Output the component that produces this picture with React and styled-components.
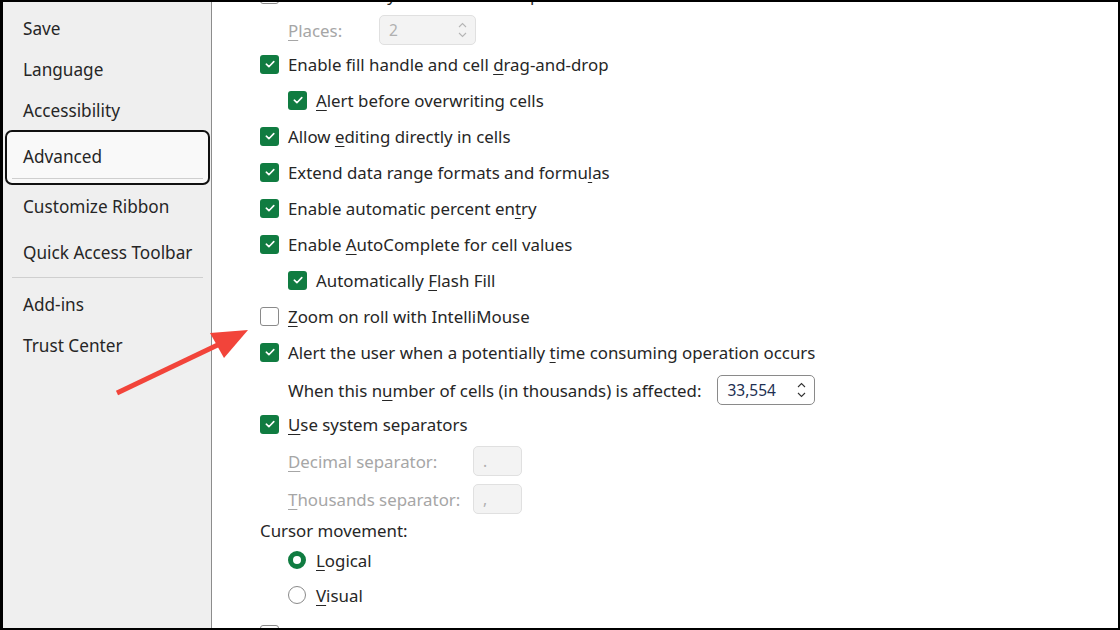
import React from "react";
import styled, { createGlobalStyle } from "styled-components";

const GlobalStyle = createGlobalStyle`
  html, body {
    margin: 0;
    padding: 0;
    background: #fff;
  }
  body {
    font-family: "Noto Sans", "Open Sans", Arial, sans-serif;
    color: #262626;
  }
`;

const navTop = [
    { label: "Save", h: 41 },
    { label: "Language", h: 41 },
    { label: "Accessibility", h: 40 },
];

const navBottom = [
    { label: "Customize Ribbon", h: 42 },
    { label: "Quick Access Toolbar", h: 50 },
];

const navLast = [
    { label: "Add-ins", h: 52 },
    { label: "Trust Center", h: 30 },
];

function App() {
    return (
        <>
            <GlobalStyle />
            <Frame>
                <Sidebar>
                    {navTop.map((item) => (
                        <NavItem key={item.label} $h={item.h}>{item.label}</NavItem>
                    ))}
                    <ActiveItem>
                        <span>Advanced</span>
                        <ActiveLine />
                    </ActiveItem>
                    {navBottom.map((item) => (
                        <NavItem key={item.label} $h={item.h}>{item.label}</NavItem>
                    ))}
                    <NavSeparator />
                    {navLast.map((item) => (
                        <NavItem key={item.label} $h={item.h}>{item.label}</NavItem>
                    ))}
                </Sidebar>

                <Main>
                    <Row $h={40}>
                        <Check />
                        <span>Automatically insert a decimal point</span>
                    </Row>
                    <Row $h={32} $indent>
                        <FieldLabel $w={91} $disabled><u>P</u>laces:</FieldLabel>
                        <Spin $w={97} $disabled>
                            <span>2</span>
                            <Arrows $disabled />
                        </Spin>
                    </Row>
                    <Row>
                        <Check checked />
                        <span>Enable fill handle and cell <u>d</u>rag-and-drop</span>
                    </Row>
                    <Row $indent>
                        <Check checked />
                        <span><u>A</u>lert before overwriting cells</span>
                    </Row>
                    <Row>
                        <Check checked />
                        <span>Allow <u>e</u>diting directly in cells</span>
                    </Row>
                    <Row>
                        <Check checked />
                        <span>Extend data range formats and formu<u>l</u>as</span>
                    </Row>
                    <Row>
                        <Check checked />
                        <span>Enable automatic percent en<u>t</u>ry</span>
                    </Row>
                    <Row>
                        <Check checked />
                        <span>Enable <u>A</u>utoComplete for cell values</span>
                    </Row>
                    <Row $indent>
                        <Check checked />
                        <span>Automatically <u>F</u>lash Fill</span>
                    </Row>
                    <Row>
                        <Check />
                        <span><u>Z</u>oom on roll with IntelliMouse</span>
                    </Row>
                    <Row>
                        <Check checked />
                        <span>Alert the user when a potentially <u>t</u>ime consuming operation occurs</span>
                    </Row>
                    <Row $h={40} $indent>
                        <FieldLabel>When this n<u>u</u>mber of cells (in thousands) is affected:</FieldLabel>
                        <Spin $w={98}>
                            <Value>33,554</Value>
                            <Arrows />
                        </Spin>
                    </Row>
                    <Row $h={28}>
                        <Check checked />
                        <span><u>U</u>se system separators</span>
                    </Row>
                    <Row $h={46} $indent>
                        <FieldLabel $w={185} $disabled><u>D</u>ecimal separator:</FieldLabel>
                        <Spin $w={49} $disabled><span>.</span></Spin>
                    </Row>
                    <Row $h={30} $indent>
                        <FieldLabel $w={185} $disabled><u>T</u>housands separator:</FieldLabel>
                        <Spin $w={49} $disabled><span>,</span></Spin>
                    </Row>
                    <Row $h={32}>
                        <span>Cursor movement:</span>
                    </Row>
                    <Row $h={28} $indent>
                        <Radio checked />
                        <span><u>L</u>ogical</span>
                    </Row>
                    <Row $h={42} $indent>
                        <Radio />
                        <span><u>V</u>isual</span>
                    </Row>
                    <Row>
                        <Check />
                        <span>Do not automatically hyperlink screenshot</span>
                    </Row>
                </Main>

                <Pointer viewBox="0 0 1120 630">
                    <line x1="117" y1="393" x2="226" y2="341" stroke="#f2443a" strokeWidth="5" />
                    <polygon points="210,333 248,330 224,358" fill="#f2443a" />
                </Pointer>
            </Frame>
        </>
    );
}
export default App;

function Check({ checked }) {
    return (
        <Box $checked={checked}>
            {checked && (
                <svg width="12" height="12" viewBox="0 0 12 12">
                    <path d="M2.3 6.2 L4.9 8.7 L9.8 3.6" fill="none" stroke="#fff" strokeWidth="1.6" strokeLinecap="round" strokeLinejoin="round" />
                </svg>
            )}
        </Box>
    );
}

function Arrows({ $disabled }) {
    const c = $disabled ? "#b5b5b5" : "#333";
    return (
        <ArrowCol>
            <svg width="9" height="6" viewBox="0 0 9 6">
                <path d="M1 5 L4.5 1.5 L8 5" fill="none" stroke={c} strokeWidth="1.1" />
            </svg>
            <svg width="9" height="6" viewBox="0 0 9 6">
                <path d="M1 1 L4.5 4.5 L8 1" fill="none" stroke={c} strokeWidth="1.1" />
            </svg>
        </ArrowCol>
    );
}

const Frame = styled.div`
    position: relative;
    width: 1120px;
    height: 630px;
    box-sizing: border-box;
    border: 2px solid #000;
    border-left-width: 3px;
    display: flex;
    overflow: hidden;
    background: #fff;
`;

const Sidebar = styled.div`
    width: 208px;
    flex: none;
    background: #efefef;
    border-right: 1px solid #8c8c8c;
    padding-top: 6px;
    box-sizing: content-box;
    font-size: 17.2px;
`;

const NavItem = styled.div`
    height: ${(p) => p.$h}px;
    display: flex;
    align-items: center;
    padding-left: 20px;
    color: #262626;
`;

const ActiveItem = styled.div`
    margin: 0 1px 0 2px;
    height: 55px;
    box-sizing: border-box;
    border: 2px solid #111;
    border-radius: 7px;
    background: #f9f9f9;
    display: flex;
    flex-direction: column;
    justify-content: flex-end;
    padding: 0 5px 4px 5px;

    & > span {
        padding-left: 11px;
        line-height: 26px;
        margin-bottom: 8px;
    }
`;

const ActiveLine = styled.div`
    height: 1px;
    background: #cfcfcf;
`;

const NavSeparator = styled.div`
    height: 1px;
    background: #cfcfcf;
    margin: 0 8px 0 9px;
`;

const Main = styled.div`
    flex: 1;
    margin-top: -28px;
    padding-left: 48px;
    font-size: 16.85px;
    color: #262626;
`;

const Row = styled.div`
    height: ${(p) => p.$h || 36}px;
    flex: none;
    display: flex;
    align-items: center;
    gap: 9px;
    padding-left: ${(p) => (p.$indent ? 28 : 0)}px;
    white-space: nowrap;

    & u {
        text-decoration-thickness: 1px;
        text-underline-offset: 3px;
    }
`;

const Box = styled.div`
    width: 19px;
    height: 19px;
    flex: none;
    box-sizing: border-box;
    border-radius: 3px;
    display: flex;
    align-items: center;
    justify-content: center;
    background: ${(p) => (p.$checked ? "#107c41" : "#fff")};
    border: ${(p) => (p.$checked ? "none" : "1.5px solid #8a8a8a")};
`;

const Radio = styled.div`
    width: 18px;
    height: 18px;
    flex: none;
    box-sizing: border-box;
    border-radius: 50%;
    margin-right: 1px;
    background: #fff;
    border: ${(p) => (p.checked ? "5px solid #107c41" : "1.5px solid #8a8a8a")};
`;

const FieldLabel = styled.span`
    width: ${(p) => (p.$w ? `${p.$w}px` : "auto")};
    flex: none;
    margin-right: ${(p) => (p.$w ? -9 : 7)}px;
    color: ${(p) => (p.$disabled ? "#a6a6a6" : "#262626")};
`;

const Spin = styled.div`
    width: ${(p) => p.$w}px;
    height: 30px;
    box-sizing: border-box;
    flex: none;
    display: flex;
    align-items: center;
    justify-content: space-between;
    padding: 0 8px 0 9px;
    border-radius: 5px;
    border: 1px solid ${(p) => (p.$disabled ? "#e0e0e0" : "#8a8a8a")};
    background: ${(p) => (p.$disabled ? "#f3f3f3" : "#fff")};
    color: ${(p) => (p.$disabled ? "#b0b0b0" : "#262626")};
    font-size: 15.5px;
`;

const Value = styled.span`
    color: #1e2f52;
`;

const ArrowCol = styled.div`
    display: flex;
    flex-direction: column;
    gap: 4px;
`;

const Pointer = styled.svg`
    position: absolute;
    left: -3px;
    top: -2px;
    width: 1120px;
    height: 630px;
    pointer-events: none;
`;
